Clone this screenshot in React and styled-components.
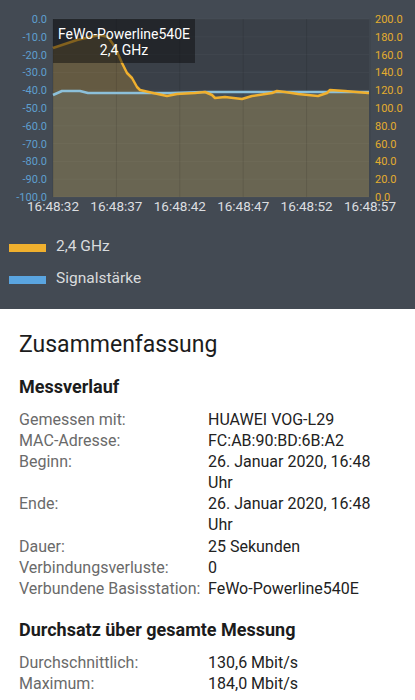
import React from "react";
import styled, { createGlobalStyle } from "styled-components";

const Global = createGlobalStyle`
  html, body { margin: 0; padding: 0; background: #ffffff; }
  body { font-family: Roboto, "Noto Sans", "Liberation Sans", sans-serif; }
`;

const Page = styled.div`
  width: 415px;
  display: flex;
  flex-direction: column;
`;

const Dark = styled.section`
  background: #434a53;
  height: 309px;
  display: flex;
  flex-direction: column;
`;

const ChartSvg = styled.svg`
  display: block;
  width: 415px;
  height: 220px;
`;

const Legend = styled.div`
  display: flex;
  flex-direction: column;
  padding: 10px 0 0 9px;
`;

const LegendRow = styled.div`
  display: flex;
  align-items: center;
  gap: 10px;
  height: 32px;
`;

const Swatch = styled.span`
  width: 37px;
  height: 8px;
  background: ${(p) => p.$color};
  margin-top: 3px;
`;

const LegendLabel = styled.span`
  color: #d9dbdd;
  font-size: 15.5px;
`;

const Summary = styled.section`
  background: #ffffff;
  padding: 21px 19px 0 19px;
  display: flex;
  flex-direction: column;
`;

const Title = styled.h1`
  margin: 0;
  font-size: 23px;
  font-weight: 400;
  line-height: 30px;
  color: #1c1c1c;
`;

const SectionTitle = styled.h2`
  margin: ${(p) => p.$top}px 0 10px 0;
  font-size: 18px;
  font-weight: 700;
  line-height: 24px;
  color: #1c1c1c;
`;

const Rows = styled.dl`
  margin: 0;
  display: grid;
  grid-template-columns: 189px 188px;
  font-size: 16px;
  line-height: 21.1px;
`;

const Label = styled.dt`
  margin: 0;
  color: #6a6a6a;
  white-space: nowrap;
`;

const Value = styled.dd`
  margin: 0;
  color: #222222;
`;

const X0 = 53;
const X1 = 370;
const Y0 = 19;
const Y1 = 197;

const orange = [
  [53, 48], [62, 45], [77, 40], [90, 37], [100, 35], [108, 37], [115, 47],
  [122, 63], [127, 73], [132, 78], [137, 87], [140, 90], [153, 93], [167, 96],
  [177, 94], [195, 93], [205, 92], [212, 95], [215, 98], [225, 97], [242, 99],
  [252, 96], [272, 93], [277, 91], [285, 92], [298, 94], [318, 96], [327, 93],
  [330, 90], [345, 91], [368, 93], [369, 93],
];

const blue = [
  [53, 95], [62, 91], [80, 91], [88, 93], [133, 93], [170, 93], [205, 92],
  [260, 92], [327, 92], [369, 92],
];

const toPath = (pts) => pts.map((p, i) => `${i ? "L" : "M"}${p[0]},${p[1]}`).join(" ");
const toArea = (pts) =>
  `${toPath(pts)} L${pts[pts.length - 1][0]},${Y1} L${pts[0][0]},${Y1} Z`;

const leftTicks = Array.from({ length: 11 }, (_, i) => i);
const xLabels = ["16:48:32", "16:48:37", "16:48:42", "16:48:47", "16:48:52", "16:48:57"];

function Chart() {
  const step = (Y1 - Y0) / 10;
  const xStep = (X1 - X0) / 5;
  return (
    <ChartSvg viewBox="0 0 415 220">
      <rect x={X0} y={Y0} width={X1 - X0 - 1} height={Y1 - Y0} fill="#3a4048" />
      <path d={toArea(orange)} fill="rgba(240,176,48,0.23)" />
      <path d={toArea(blue)} fill="rgba(150,190,215,0.11)" />
      {leftTicks.map((i) => (
        <line key={"h" + i} x1={X0} x2={X1 - 1} y1={Y0 + i * step} y2={Y0 + i * step}
          stroke="rgba(255,255,255,0.03)" strokeWidth="1" />
      ))}
      {xLabels.map((_, i) => (
        <line key={"v" + i} x1={X0 + i * xStep} x2={X0 + i * xStep} y1={Y0} y2={Y1}
          stroke="rgba(0,0,0,0.1)" strokeWidth="1" />
      ))}
      <path d={toPath(blue)} fill="none" stroke="#8cc0da" strokeWidth="2.6" strokeLinejoin="round" />
      <path d={toPath(orange)} fill="none" stroke="#f0b02e" strokeWidth="2.5" strokeLinejoin="round" />
      <rect x={X0} y={Y0} width={142} height={44} fill="rgba(10,10,12,0.48)" />
      <text x={124} y={38.5} fill="#ffffff" fontSize="14" textAnchor="middle"
        fontFamily="Roboto, sans-serif">FeWo-Powerline540E</text>
      <text x={124} y={54.5} fill="#ffffff" fontSize="14" textAnchor="middle"
        fontFamily="Roboto, sans-serif">2,4 GHz</text>
      {leftTicks.map((i) => (
        <text key={"l" + i} x={47} y={Y0 + i * step + 4} fill="#5e9fcf" fontSize="11"
          textAnchor="end" fontFamily="Roboto, sans-serif">
          {(-10 * i).toFixed(1)}
        </text>
      ))}
      {leftTicks.map((i) => (
        <text key={"r" + i} x={375} y={Y0 + i * step + 4} fill="#e3ad2e" fontSize="11"
          textAnchor="start" fontFamily="Roboto, sans-serif">
          {(200 - 20 * i).toFixed(1)}
        </text>
      ))}
      {xLabels.map((t, i) => (
        <text key={"x" + i} x={X0 + i * xStep} y={211} fill="#dcdee0" fontSize="13.5"
          textAnchor="middle" fontFamily="Roboto, sans-serif">
          {t}
        </text>
      ))}
    </ChartSvg>
  );
}

const messverlauf = [
  ["Gemessen mit:", "HUAWEI VOG-L29"],
  ["MAC-Adresse:", "FC:AB:90:BD:6B:A2"],
  ["Beginn:", "26. Januar 2020, 16:48 Uhr"],
  ["Ende:", "26. Januar 2020, 16:48 Uhr"],
  ["Dauer:", "25 Sekunden"],
  ["Verbindungsverluste:", "0"],
  ["Verbundene Basisstation:", "FeWo-Powerline540E"],
];

const durchsatz = [
  ["Durchschnittlich:", "130,6 Mbit/s"],
  ["Maximum:", "184,0 Mbit/s"],
];

function InfoRows({ items }) {
  return (
    <Rows>
      {items.map(([k, v]) => (
        <React.Fragment key={k}>
          <Label>{k}</Label>
          <Value>{v}</Value>
        </React.Fragment>
      ))}
    </Rows>
  );
}

export default function App() {
  return (
    <Page>
      <Global />
      <Dark>
        <Chart />
        <Legend>
          <LegendRow>
            <Swatch $color="#f0b02e" />
            <LegendLabel>2,4 GHz</LegendLabel>
          </LegendRow>
          <LegendRow>
            <Swatch $color="#5aa5e0" />
            <LegendLabel>Signalstärke</LegendLabel>
          </LegendRow>
        </Legend>
      </Dark>
      <Summary>
        <Title>Zusammenfassung</Title>
        <SectionTitle $top={15}>Messverlauf</SectionTitle>
        <InfoRows items={messverlauf} />
        <SectionTitle $top={19}>Durchsatz über gesamte Messung</SectionTitle>
        <InfoRows items={durchsatz} />
      </Summary>
    </Page>
  );
}
